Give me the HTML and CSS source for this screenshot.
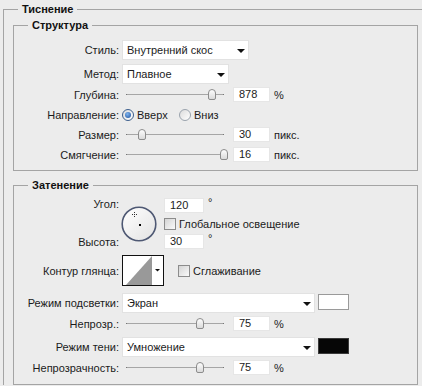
FILE: index.html
```html
<!DOCTYPE html>
<html lang="ru">
<head>
    <meta charset="UTF-8">
    <title>Тиснение</title>
    <link rel="stylesheet" href="styles.css">
</head>
<body>
    <fieldset class="outer">
        <legend>Тиснение</legend>

        <fieldset class="panel panel-structure">
            <legend>Структура</legend>

            <div class="row row-sel">
                <label class="lbl">Стиль:</label>
                <div class="select w-style"><span>Внутренний скос</span><i class="arrow"></i></div>
            </div>
            <div class="row row-sel gap4">
                <label class="lbl">Метод:</label>
                <div class="select w-method"><span>Плавное</span><i class="arrow"></i></div>
            </div>
            <div class="row row-num gap3">
                <label class="lbl">Глубина:</label>
                <div class="slider"><div class="track"><i class="thumb" style="left: 87.8%"></i></div></div>
                <span class="num">878</span><span class="unit">%</span>
            </div>
            <div class="row row-num gap5">
                <label class="lbl">Направление:</label>
                <span class="radio on"></span><span class="opt opt-up">Вверх</span>
                <span class="radio"></span><span class="opt">Вниз</span>
            </div>
            <div class="row row-num gap5">
                <label class="lbl">Размер:</label>
                <div class="slider"><div class="track"><i class="thumb" style="left: 16.5%"></i></div></div>
                <span class="num">30</span><span class="unit">пикс.</span>
            </div>
            <div class="row row-num gap5">
                <label class="lbl">Смягчение:</label>
                <div class="slider"><div class="track"><i class="thumb" style="left: 100%"></i></div></div>
                <span class="num">16</span><span class="unit">пикс.</span>
            </div>
        </fieldset>

        <fieldset class="panel panel-shade">
            <legend>Затенение</legend>

            <div class="angle">
                <div class="angle-labels">
                    <label class="lbl">Угол:</label>
                    <label class="lbl">Высота:</label>
                </div>
                <svg class="dial" width="36" height="36" viewBox="0 0 36 36">
                    <defs>
                        <linearGradient id="dialFill" x1="0" y1="0" x2="1" y2="1">
                            <stop offset="0" stop-color="#ffffff"/>
                            <stop offset="1" stop-color="#e2e2e2"/>
                        </linearGradient>
                    </defs>
                    <circle cx="18" cy="18" r="16.8" fill="url(#dialFill)" stroke="#4e5873" stroke-width="1.6"/>
                    <path d="M13.5 6v5M11 8.5h5" stroke="#333" stroke-width="1" stroke-dasharray="1 1" fill="none"/>
                    <rect x="18" y="18" width="2" height="2" fill="#000"/>
                </svg>
                <div class="angle-fields">
                    <div class="field"><span class="num w-angle">120</span><span class="deg">°</span></div>
                    <div class="field"><span class="check"></span><span class="opt">Глобальное освещение</span></div>
                    <div class="field"><span class="num w-angle">30</span><span class="deg">°</span></div>
                </div>
            </div>

            <div class="row row-contour">
                <label class="lbl">Контур глянца:</label>
                <svg class="contour" width="42" height="31" viewBox="0 0 42 31">
                    <rect x="0.5" y="0.5" width="41" height="30" fill="#fff" stroke="#111"/>
                    <polygon points="4,30 30,1 30,30" fill="#999"/>
                    <polygon points="33,14 38,14 35.5,16.5" fill="#111"/>
                </svg>
                <span class="check check-smooth"></span><span class="opt">Сглаживание</span>
            </div>
            <div class="row row-sel gap7">
                <label class="lbl">Режим подсветки:</label>
                <div class="select w-mode"><span>Экран</span><i class="arrow"></i></div>
                <span class="swatch"></span>
            </div>
            <div class="row row-num gap3">
                <label class="lbl">Непрозр.:</label>
                <div class="slider"><div class="track"><i class="thumb" style="left: 75%"></i></div></div>
                <span class="num">75</span><span class="unit">%</span>
            </div>
            <div class="row row-sel gap6">
                <label class="lbl">Режим тени:</label>
                <div class="select w-mode"><span>Умножение</span><i class="arrow"></i></div>
                <span class="swatch swatch-dark"></span>
            </div>
            <div class="row row-num gap3">
                <label class="lbl">Непрозрачность:</label>
                <div class="slider"><div class="track"><i class="thumb" style="left: 75%"></i></div></div>
                <span class="num">75</span><span class="unit">%</span>
            </div>
        </fieldset>
    </fieldset>
</body>
</html>
```

FILE: styles.css
```css
* {
    margin: 0;
    padding: 0;
    box-sizing: border-box;
}

body {
    background: #ececec;
    font: 11px "Liberation Sans", Tahoma, Arial, sans-serif;
    color: #1b1b1b;
    overflow: hidden;
}

fieldset {
    border: 1px solid #a4a4a4;
    min-width: 0;
}

legend {
    font-weight: bold;
    line-height: 13px;
    padding: 0 4px;
    color: #111;
}

/* outer frame runs off the right and bottom edge */
.outer {
    margin: 3px 0 0 3px;
    padding: 0 0 0 9px;
    border-right: none;
    border-bottom: none;
}

.outer > legend {
    margin-left: 5px;
}

.panel {
    width: 405px;
    margin-top: 3px;
}

.panel > legend {
    margin-left: 14px;
}

.panel-structure {
    padding: 8px 0 8px;
}

.panel-shade {
    margin-top: 8px;
    padding: 6px 0 9px;
}

.row {
    display: flex;
    align-items: center;
}

.row-sel {
    height: 20px;
}

.row-num {
    height: 15px;
}

.gap3 { margin-top: 3px; }
.gap4 { margin-top: 4px; }
.gap5 { margin-top: 5px; }
.gap6 { margin-top: 6px; }
.gap7 { margin-top: 7px; }

.lbl {
    flex: none;
    width: 105px;
    margin-right: 3px;
    text-align: right;
    white-space: nowrap;
}

/* dropdowns */
.select {
    height: 20px;
    background: #fff;
    border: 1px solid #e2e2e2;
    display: flex;
    align-items: center;
    justify-content: space-between;
    padding: 0 3px 0 4px;
}

.w-style { width: 127px; }
.w-method { width: 107px; }
.w-mode { width: 193px; }

.arrow {
    width: 0;
    height: 0;
    border-left: 4px solid transparent;
    border-right: 4px solid transparent;
    border-top: 4px solid #111;
    margin-top: 1px;
}

/* sliders */
.slider {
    flex: none;
    width: 107px;
    height: 15px;
    margin-right: 4px;
    padding: 0 5px 0 4px;
}

.track {
    position: relative;
    height: 15px;
}

.track::before {
    content: '';
    position: absolute;
    left: 0;
    right: 0;
    top: 7px;
    height: 1px;
    background: #a6a6a6;
    border-left: 1px solid #777;
    border-right: 1px solid #777;
}

.thumb {
    position: absolute;
    top: 2px;
    width: 8px;
    height: 11px;
    margin-left: -4px;
    border: 1px solid #8c8c8c;
    border-radius: 4px 4px 2px 2px;
    background: linear-gradient(#fdfdfd, #dadada);
}

.num {
    flex: none;
    width: 37px;
    height: 15px;
    line-height: 13px;
    padding-left: 5px;
    background: #fff;
    border: 1px solid #e6e6e6;
}

.unit {
    margin-left: 4px;
}

/* radio + checkbox */
.radio {
    flex: none;
    width: 12px;
    height: 12px;
    border-radius: 50%;
    border: 1px solid #9aa3ad;
    background: linear-gradient(135deg, #dcdcdc, #fff);
    display: flex;
    align-items: center;
    justify-content: center;
    margin-right: 3px;
}

.radio.on {
    border-color: #3c5e8c;
}

.radio.on::after {
    content: '';
    width: 6px;
    height: 6px;
    border-radius: 50%;
    background: radial-gradient(circle at 40% 35%, #7fb4ee, #1d4f9c);
}

.opt-up {
    width: 42px;
}

.check {
    flex: none;
    width: 12px;
    height: 12px;
    border: 1px solid #8c8c8c;
    background: linear-gradient(135deg, #d4d4d4, #fafafa);
    margin-right: 3px;
}

/* angle block */
.angle {
    display: flex;
    height: 51px;
}

.angle-labels {
    display: flex;
    flex-direction: column;
    justify-content: space-between;
    width: 105px;
    margin-right: 2px;
}

.angle-labels .lbl {
    line-height: 13px;
    margin-right: 0;
}

.dial {
    align-self: center;
    margin-right: 7px;
}

.angle-fields {
    display: flex;
    flex-direction: column;
    justify-content: space-between;
}

.field {
    display: flex;
    align-items: center;
}

.w-angle {
    width: 40px;
}

.deg {
    align-self: flex-start;
    margin-left: 4px;
    line-height: 9px;
}

/* gloss contour */
.row-contour {
    height: 31px;
    margin-top: 6px;
}

.check-smooth {
    margin-left: 14px;
}

.swatch {
    align-self: flex-start;
    margin: 1px 0 0 3px;
    width: 31px;
    height: 16px;
    background: #fff;
    border: 1px solid #9a9a9a;
}

.swatch-dark {
    background: #060606;
    border-color: #3a3a3a;
}
```
